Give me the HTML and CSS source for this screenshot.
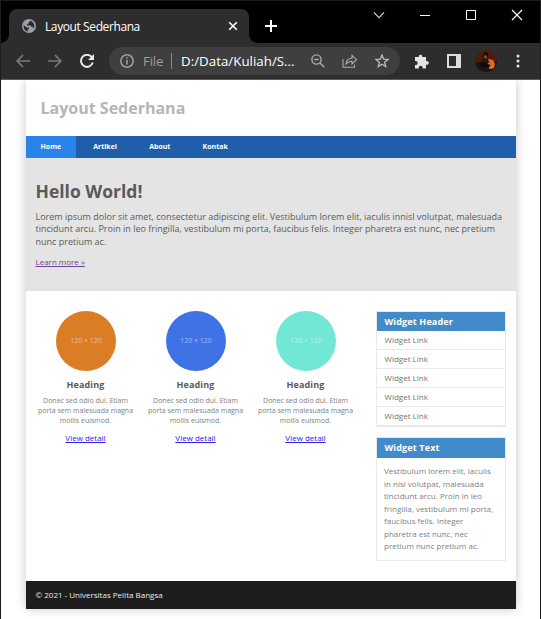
FILE: index.html
```html
<!DOCTYPE html>
<html lang="id">
<head>
<meta charset="utf-8">
<title>Layout Sederhana</title>
<link rel="stylesheet" href="styles.css">
</head>
<body>
<div class="window">
  <div class="tabstrip">
    <div class="tab">
      <svg class="globe" width="14" height="14" viewBox="0 0 14 14"><circle cx="7" cy="7" r="7" fill="#9aa0a6"/><path d="M1.600 6 4.900 8.500h2v1.200L5.800 10.500v2C3.500 12.400 1.300 9.800 1.600 6ZM8 1.500v1L6.600 3.500v1L5 5v1.400h3.600l1 1.700h1.300l.9 1.300c1.300-2.700.3-6.600-3.800-7.900Z" fill="#2d2d2d"/></svg>
      <span class="tab-title">Layout Sederhana</span>
      <svg class="tab-close" width="10" height="10" viewBox="0 0 10 10"><path d="M1.200 1.200l7.600 7.600M8.800 1.200 1.200 8.800" stroke="#fff" stroke-width="1.600"/></svg>
    </div>
    <svg class="plus" width="14" height="14" viewBox="0 0 14 14"><path d="M7 1v12M1 7h12" stroke="#fff" stroke-width="2"/></svg>
    <div class="controls">
      <svg width="12" height="12" viewBox="0 0 12 12"><path d="M1 3.500 6 8.700l5-5.200" fill="none" stroke="#ccc" stroke-width="1.100"/></svg>
      <svg width="12" height="12" viewBox="0 0 12 12"><path d="M1 6.500h10" stroke="#fff"/></svg>
      <svg width="12" height="12" viewBox="0 0 12 12"><path d="M1.500 1.500h9v9h-9z" fill="none" stroke="#fff"/></svg>
      <svg width="12" height="12" viewBox="0 0 12 12"><path d="M1 1l10 10M11 1 1 11" stroke="#fff" stroke-width="1.100"/></svg>
    </div>
  </div>
  <div class="toolbar">
    <div class="nav-icons">
      <svg width="14" height="14" viewBox="0 0 14 14"><path d="M14 7H1.200M7 1 1.200 7 7 13" fill="none" stroke="#7b7b7b" stroke-width="1.700"/></svg>
      <svg width="14" height="14" viewBox="0 0 14 14"><path d="M0 7h12.800M7 1l5.800 6L7 13" fill="none" stroke="#7b7b7b" stroke-width="1.700"/></svg>
      <svg width="14" height="14" viewBox="0 0 14 14"><path d="M11.800 3.200A6 6 0 1 0 12.800 8.500" fill="none" stroke="#e8e8e8" stroke-width="2"/><path d="M14 0v6H8z" fill="#e8e8e8"/></svg>
    </div>
    <div class="omnibox">
      <svg class="info" width="14" height="14" viewBox="0 0 14 14"><circle cx="7" cy="7" r="6.200" fill="none" stroke="#9aa0a6" stroke-width="1.500"/><path d="M7 6v4.500M7 3.300v1.500" stroke="#9aa0a6" stroke-width="1.600"/></svg>
      <span class="scheme">File</span><span class="sep"></span><span class="address">D:/Data/Kuliah/S...</span>
      <svg class="act" width="14" height="14" viewBox="0 0 14 14"><circle cx="5.500" cy="5.500" r="4.600" fill="none" stroke="#aaa" stroke-width="1.400"/><path d="M3.300 5.500h4.400M9 9l4.300 4.300" stroke="#aaa" stroke-width="1.500"/></svg>
      <svg class="act share" width="16" height="14" viewBox="0 0 16 14"><path d="M1 5v8.200h11.500V10.500M4 10c.4-4 2.500-5.700 6-5.700V1.300l4.600 4.400L10 10V7.200C7.300 7.200 5.400 8 4 10Z" fill="none" stroke="#aaa" stroke-width="1.100"/></svg>
      <svg class="act star" width="14" height="14" viewBox="0 0 14 14"><path d="M7 1 8.600 5.100l4.400.3-3.400 2.800 1.100 4.300L7 10.200l-3.700 2.300 1.100-4.300L1 5.400l4.400-.3Z" fill="none" stroke="#bbb" stroke-width="1.300"/></svg>
    </div>
    <div class="tools">
      <svg width="15" height="15" viewBox="0 0 15 15"><path d="M1 3h3.800C4 .200 8.800-.500 8.200 3H12v4c3.700-.5 3.700 4.400 0 3.800V14.500H8.600c.7-3.800-4.600-3.800-3.800 0H1v-3.500c3.500.5 3.500-4.700 0-4Z" fill="#e4e4e4"/></svg>
      <svg class="panel" width="14" height="14" viewBox="0 0 14 14"><path d="M0 0h14v14H0zM2 2v10h7V2z" fill="#ddd" fill-rule="evenodd"/></svg>
      <svg class="avatar" width="22" height="22" viewBox="0 0 22 22"><defs><clipPath id="face"><circle cx="11" cy="11" r="11"/></clipPath></defs><g clip-path="url(#face)"><path d="M0 0h22v22H0z" fill="#4d1c0b"/><path d="M0 12h22v10H0z" fill="#21130f"/><path d="M12 10l2-1 4 1 2 4-1 4-3 1-1-4-3-2z" fill="#ec6219"/><path d="M6.500 10l2-2 4 1 2 3-3 2-5-2z" fill="#2a1512"/><path d="M8 4l2-2 3 1v3l-2 3-3-2z" fill="#140f0d"/><path d="M9 5.500h2.500V8L10 9z" fill="#a06040"/><path d="M4.500 12.500h7l2 5H5.500z" fill="#0d0c0f"/><path d="M14 17l4-1-1 2-3 1z" fill="#d68a50"/></g></svg>
      <svg class="dots" width="4" height="14" viewBox="0 0 4 14"><circle cx="2" cy="2" r="1.500" fill="#e8e8e8"/><circle cx="2" cy="7" r="1.500" fill="#e8e8e8"/><circle cx="2" cy="12" r="1.500" fill="#e8e8e8"/></svg>
    </div>
  </div>
  <div class="viewport">
    <div class="container">
      <header><h1>Layout Sederhana</h1></header>
      <nav><a class="active">Home</a><a>Artikel</a><a>About</a><a>Kontak</a></nav>
      <section class="hero">
        <h2>Hello World!</h2>
        <p>Lorem ipsum dolor sit amet, consectetur adipiscing elit. Vestibulum lorem elit, iaculis innisl volutpat, malesuada<br>tincidunt arcu. Proin in leo fringilla, vestibulum mi porta, faucibus felis. Integer pharetra est nunc, nec pretium<br>nunc pretium ac.</p>
        <a class="more">Learn more »</a>
      </section>
      <div class="content">
        <main>
          <article><div class="circle orange">120 × 120</div><h3>Heading</h3><p>Donec sed odio dui. Etiam<br>porta sem malesuada magna<br>mollis euismod.</p><a>View detail</a></article>
          <article><div class="circle blue">120 × 120</div><h3>Heading</h3><p>Donec sed odio dui. Etiam<br>porta sem malesuada magna<br>mollis euismod.</p><a>View detail</a></article>
          <article><div class="circle mint">120 × 120</div><h3>Heading</h3><p>Donec sed odio dui. Etiam<br>porta sem malesuada magna<br>mollis euismod.</p><a>View detail</a></article>
        </main>
        <aside>
          <div class="widget links"><h3>Widget Header</h3><ul><li>Widget Link</li><li>Widget Link</li><li>Widget Link</li><li>Widget Link</li><li>Widget Link</li></ul></div>
          <div class="widget text"><h3>Widget Text</h3><p>Vestibulum lorem elit, iaculis<br>in nisl volutpat, malesuada<br>tincidunt arcu. Proin in leo<br>fringilla, vestibulum mi porta,<br>faucibus felis. Integer<br>pharetra est nunc, nec<br>pretium nunc pretium ac.</p></div>
        </aside>
      </div>
      <footer>© 2021 - Universitas Pelita Bangsa</footer>
    </div>
  </div>
</div>
</body>
</html>
```
FILE: styles.css
```css
* { box-sizing: border-box; }
body, h1, h2, h3, p, ul { margin: 0; padding: 0; }
body { width: 541px; height: 619px; overflow: hidden; font-family: "Open Sans", sans-serif; color: #5a5a5a; background: #1f1f1f; white-space: nowrap; }
svg { display: block; flex: none; }
.window { display: flex; flex-direction: column; height: 619px; padding: 0 1px; }
.tabstrip { height: 43px; border-top: 1px solid #1c1c1c; background: #000; display: flex; align-items: flex-start; }
.tab { position: relative; width: 240px; height: 34px; margin: 8px 0 0 8px; padding: 0 11px 0 13px; display: flex; align-items: center; border-radius: 8px 8px 0 0; background: #2d2d2d; color: #fff; font: 12px "Open Sans", sans-serif; }
.tab::before, .tab::after { content: ""; position: absolute; bottom: 0; width: 8px; height: 8px; }
.tab::before { left: -8px; background: radial-gradient(circle at 0 0, #000 7.500px, #2d2d2d 8px); }
.tab::after { right: -8px; background: radial-gradient(circle at 100% 0, #000 7.500px, #2d2d2d 8px); }
.tab-title { margin-left: 9px; flex: 1; letter-spacing: -.4px; }
.plus { margin: 18px 0 0 15px; }
.controls { display: flex; gap: 34px; margin: 8px 0 0 95px; }
.toolbar { height: 37px; flex: none; border-bottom: 1px solid #5a5a5a; background: #2d2d2d; display: flex; align-items: center; }
.nav-icons { display: flex; gap: 18px; margin-left: 15px; }
.omnibox { width: 291px; height: 28px; margin-left: 15px; padding-left: 11px; border-radius: 14px; background: #3f3f3f; display: flex; align-items: center; font: 13.300px "Open Sans", sans-serif; color: #fff; }
.scheme { margin-left: 9px; width: 20px; color: #9e9e9e; letter-spacing: -.2px; }
.sep { width: 1px; height: 16px; margin: 0 9px 0 8px; background: #888; }
.address { width: 114px; letter-spacing: .02px; }
.act { margin-left: 16px; }
.share { margin-left: 17px; }
.star { margin-left: 17px; }
.tools { display: flex; align-items: center; margin-left: 14px; }
.panel { margin-left: 18px; }
.avatar { margin-left: 14px; }
.dots { margin-left: 19px; }
.viewport { flex: 1; background: #fff; padding: 0 24px 0 25px; }
.container { height: 529px; background: #fff; box-shadow: 0 0 10px rgba(0,0,0,.22); display: flex; flex-direction: column; clip-path: inset(0 -24px -20px -24px); }
header { height: 56px; padding: 16px 14.500px; }
h1 { font-size: 16px; line-height: 24px; color: #b5b5b5; }
nav { height: 22px; display: flex; background: #1f5faa; color: #fff; font-size: 7px; font-weight: 700; line-height: 22px; }
nav a { padding: 0 14.500px; margin-right: 3.200px; }
.active { background: #2a83e8; }
nav .active { width: 50px; margin-right: 2.700px; }
.hero { height: 133px; padding: 21px 9.500px 0; background: #e4e4e4; }
.hero h2 { font-size: 17.500px; line-height: 25px; }
.hero p { margin-top: 7px; font-size: 9px; line-height: 12.400px; }
.more { display: block; margin-top: 7px; font-size: 8px; line-height: 14px; color: #6f4293; text-decoration: underline; }
.content { flex: 1; display: flex; justify-content: space-between; padding: 20px 10px 0 5px; }
main { display: flex; }
article { width: 110px; padding-right: 1px; text-align: center; }
.circle { width: 60px; height: 60px; margin: 0 0 0 25px; border-radius: 50%; color: rgba(255,255,255,.5); font-size: 7px; line-height: 60px; }
.orange { background: #da7d25; }
.blue { background: #3f73e5; }
.mint { background: #72e7d5; }
article h3 { margin-top: 6px; font-size: 9px; letter-spacing: .15px; line-height: 16px; }
article p { margin-top: 3px; font-size: 7px; line-height: 10px; color: #808080; }
article a { display: block; margin-top: 4px; font-size: 8px; line-height: 16px; color: #2d20e8; text-decoration: underline; }
aside { width: 130px; }
.widget { border: 1px solid #e9e9e9; }
.widget h3 { padding-left: 7.500px; background: #428bca; color: #fff; font-size: 9px; letter-spacing: .15px; line-height: 19px; }
.widget ul { list-style: none; }
.widget li { height: 19px; padding-left: 7.500px; border-bottom: 1px solid #e9e9e9; font-size: 8px; line-height: 18px; color: #747474; }
.text { margin-top: 10px; height: 124px; }
.widget.text h3 { line-height: 20px; }
.text p { padding: 7px; font-size: 8px; line-height: 12.500px; color: #808080; }
footer { height: 28px; padding-left: 9.500px; background: #1d1d1d; color: #e9e9e9; font-size: 8px; line-height: 28px; }
```
